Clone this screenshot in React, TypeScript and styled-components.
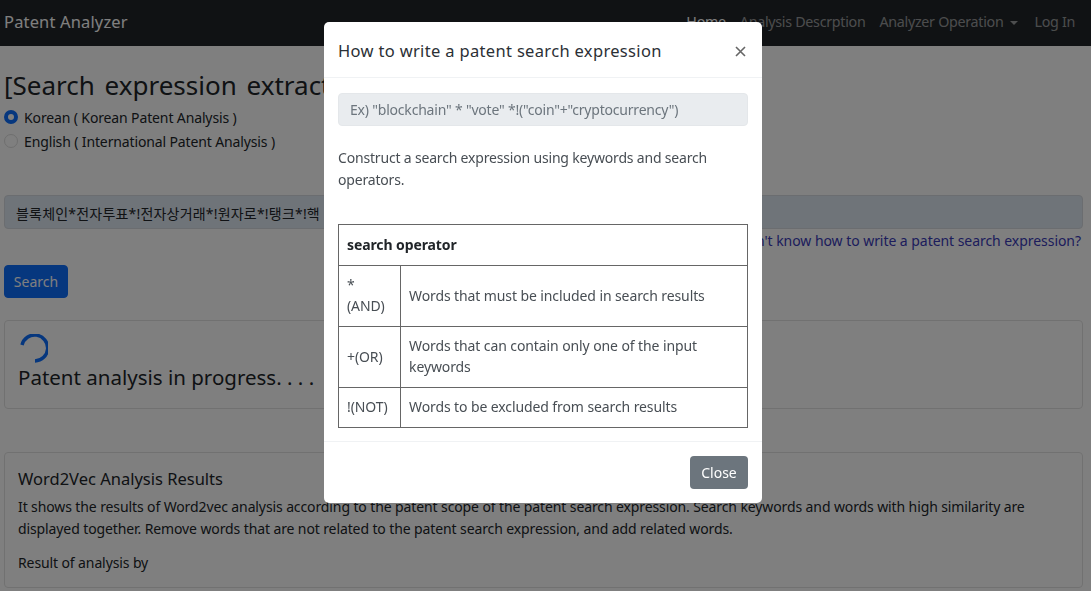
import { createGlobalStyle } from "styled-components";
import styled from "styled-components";

const Global = createGlobalStyle`
  * { box-sizing: border-box; }
  html, body { margin: 0; height: 100%; overflow: hidden; background: #fff; }
  body {
    font-family: "Noto Sans", "Noto Sans CJK KR", "Open Sans", sans-serif;
    font-size: 14px;
    line-height: 21px;
    color: #212529;
  }
`;

const Navbar = styled.nav`
  height: 46px;
  background: #212529;
  display: flex;
  align-items: center;
  justify-content: space-between;
  padding: 0 16px 4px 4px;
`;

const Brand = styled.div`
  color: #fff;
  font-size: 16.5px;
  letter-spacing: 0.15px;
`;

const NavLinks = styled.div`
  display: flex;
  align-items: center;
  gap: 14px;
`;

const NavLink = styled.span<{ $active?: boolean }>`
  color: ${(p) => (p.$active ? "#fff" : "rgba(255,255,255,.55)")};
  font-size: 14.3px;
  letter-spacing: -0.3px;
  white-space: nowrap;
`;

const Caret = styled.i`
  display: inline-block;
  margin-left: 7px;
  margin-right: 2px;
  vertical-align: 2px;
  border-top: 4px solid currentColor;
  border-left: 4px solid transparent;
  border-right: 4px solid transparent;
`;

const Main = styled.main`
  padding: 0 8px 0 4px;
`;

const Heading = styled.h1`
  margin: 20px 0 0;
  font-size: 26px;
  line-height: 38px;
  font-weight: 400;
  word-spacing: 3px;
  white-space: nowrap;
`;

const RadioGroup = styled.div`
  margin-top: 2px;
  display: flex;
  flex-direction: column;
  gap: 2px;
`;

const RadioRow = styled.label`
  display: flex;
  align-items: center;
  gap: 6px;
  height: 22px;
  font-size: 14px;
  letter-spacing: -0.13px;
`;

const RadioDot = styled.span<{ $checked?: boolean }>`
  width: 14px;
  height: 14px;
  border-radius: 50%;
  background: #fff;
  border: ${(p) => (p.$checked ? "4px solid #0d6efd" : "1px solid #ddd")};
`;

const SearchInput = styled.div`
  margin-top: 43px;
  height: 34px;
  background: #dfe8f2;
  border: 1px solid #d6dbe0;
  border-radius: 4px;
  padding: 2px 11px 0;
  display: flex;
  align-items: center;
  font-size: 14px;
  letter-spacing: 0.2px;
  white-space: nowrap;
  overflow: hidden;
`;

const HelpRow = styled.div`
  display: flex;
  justify-content: flex-end;
  height: 21px;
  padding-right: 2px;
`;

const HelpLink = styled.a`
  color: #3a3ab8;
  font-size: 14px;
  letter-spacing: -0.05px;
  margin-top: 1px;
`;

const PrimaryButton = styled.button`
  display: block;
  margin-top: 15px;
  width: 64px;
  height: 33px;
  border: 1px solid #0d6efd;
  border-radius: 4px;
  background: #0d6efd;
  color: #fff;
  font: inherit;
  font-size: 14px;
`;

const Card = styled.section<{ $gap: number; $height: number }>`
  margin-top: ${(p) => p.$gap}px;
  height: ${(p) => p.$height}px;
  border: 1px solid #e2e2e2;
  border-radius: 4px;
  padding: 13px 13px;
`;

const Spinner = styled.svg`
  display: block;
  width: 30px;
  height: 30px;
`;

const Progress = styled.div`
  font-size: 20.5px;
  line-height: 28px;
  margin-top: -1px;
`;

const CardTitle = styled.h5`
  margin: 0;
  font-size: 16.5px;
  line-height: 24px;
  font-weight: 400;
  padding-top: 1px;
`;

const CardText = styled.p`
  margin: 5px 0 13px;
  font-size: 14px;
  line-height: 21.5px;
  letter-spacing: -0.11px;
`;

const Backdrop = styled.div`
  position: fixed;
  inset: 0;
  background: rgba(0, 0, 0, 0.5);
`;

const Modal = styled.div`
  position: fixed;
  left: 324px;
  top: 22px;
  width: 438px;
  height: 481px;
  background: #fff;
  border-radius: 5px;
  display: flex;
  flex-direction: column;
`;

const ModalHeader = styled.header`
  height: 56px;
  flex: none;
  border-bottom: 1px solid #f0f2f4;
  padding: 1px 16px 0 14px;
  display: flex;
  align-items: center;
  justify-content: space-between;
`;

const ModalTitle = styled.h5`
  margin: 0;
  font-size: 16.5px;
  font-weight: 400;
  letter-spacing: 0.33px;
  color: #2b3035;
`;

const ModalBody = styled.div`
  flex: 1;
  padding: 15px 14px 0;
`;

const ReadonlyInput = styled.div`
  height: 33px;
  background: #e9ecef;
  border-radius: 4px;
  border: 1px solid #e4e7ea;
  padding: 0 11px;
  display: flex;
  align-items: center;
  color: #6c757d;
  font-size: 14px;
  letter-spacing: -0.2px;
  white-space: nowrap;
`;

const Hint = styled.p`
  margin: 21px 0 33px;
  font-size: 14px;
  line-height: 22px;
  color: #484e54;
  letter-spacing: -0.18px;
`;

const Table = styled.table`
  width: 100%;
  border-collapse: collapse;
  font-size: 14px;
  line-height: 21px;
  color: #484e54;
  letter-spacing: -0.1px;
  td, th {
    border: 1.5px solid #666;
    padding: 7px 8px 9px;
    font-weight: 400;
    text-align: left;
    vertical-align: middle;
  }
  th { font-weight: 700; height: 41px; color: #212529; }
  td:first-child { width: 62px; }
`;

const Row = styled.tr<{ $height: number }>`
  height: ${(p) => p.$height}px;
`;

const ModalFooter = styled.footer`
  height: 62px;
  flex: none;
  border-top: 1px solid #f0f2f4;
  padding: 14px 14px 0;
  display: flex;
  justify-content: flex-end;
  align-items: flex-start;
`;

const SecondaryButton = styled.button`
  width: 58px;
  height: 33px;
  border: 0;
  border-radius: 4px;
  background: #6c757d;
  color: #fff;
  font: inherit;
  font-size: 14px;
`;

const CloseIcon = styled.svg`
  width: 11px;
  height: 11px;
  margin-top: 2px;
`;

export default function App() {
  return (
    <>
      <Global />
      <Navbar>
        <Brand>Patent Analyzer</Brand>
        <NavLinks>
          <NavLink $active>Home</NavLink>
          <NavLink>Analysis Descrption</NavLink>
          <NavLink>
            Analyzer Operation
            <Caret />
          </NavLink>
          <NavLink>Log In</NavLink>
        </NavLinks>
      </Navbar>
      <Main>
        <Heading>[Search expression extraction]</Heading>
        <RadioGroup>
          <RadioRow>
            <RadioDot $checked />
            Korean ( Korean Patent Analysis )
          </RadioRow>
          <RadioRow>
            <RadioDot />
            English ( International Patent Analysis )
          </RadioRow>
        </RadioGroup>
        <SearchInput>블록체인*전자투표*!전자상거래*!원자로*!탱크*!핵</SearchInput>
        <HelpRow>
          <HelpLink>Don't know how to write a patent search expression?</HelpLink>
        </HelpRow>
        <PrimaryButton>Search</PrimaryButton>
        <Card $gap={22} $height={89}>
          <Spinner viewBox="0 0 30 30">
            <path
              d="M4 11 A 13 13 0 1 1 17 27"
              fill="none"
              stroke="#0d6efd"
              strokeWidth="3.4"
            />
          </Spinner>
          <Progress>Patent analysis in progress. . . .</Progress>
        </Card>
        <Card $gap={43} $height={136}>
          <CardTitle>Word2Vec Analysis Results</CardTitle>
          <CardText>
            It shows the results of Word2vec analysis according to the patent scope of the patent
            search expression. Search keywords and words with high similarity are displayed
            together. Remove words that are not related to the patent search expression, and add
            related words.
          </CardText>
          <CardText>Result of analysis by</CardText>
        </Card>
      </Main>
      <Backdrop />
      <Modal>
        <ModalHeader>
          <ModalTitle>How to write a patent search expression</ModalTitle>
          <CloseIcon viewBox="0 0 11 11">
            <path d="M1 1 L10 10 M10 1 L1 10" stroke="#666" strokeWidth="1.6" />
          </CloseIcon>
        </ModalHeader>
        <ModalBody>
          <ReadonlyInput>Ex) "blockchain" * "vote" *!("coin"+"cryptocurrency")</ReadonlyInput>
          <Hint>Construct a search expression using keywords and search operators.</Hint>
          <Table>
            <tbody>
              <tr>
                <th colSpan={2}>search operator</th>
              </tr>
              <Row $height={61}>
                <td>
                  *<br />
                  (AND)
                </td>
                <td>Words that must be included in search results</td>
              </Row>
              <Row $height={61}>
                <td>+(OR)</td>
                <td>Words that can contain only one of the input keywords</td>
              </Row>
              <Row $height={40}>
                <td>!(NOT)</td>
                <td>Words to be excluded from search results</td>
              </Row>
            </tbody>
          </Table>
        </ModalBody>
        <ModalFooter>
          <SecondaryButton>Close</SecondaryButton>
        </ModalFooter>
      </Modal>
    </>
  );
}
